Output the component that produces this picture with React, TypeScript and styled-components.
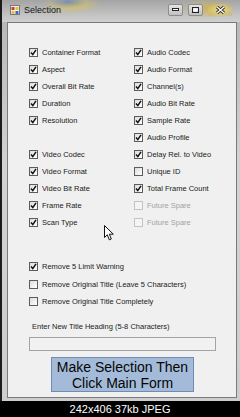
import React from "react";
import styled, { createGlobalStyle } from "styled-components";

const GlobalStyle = createGlobalStyle`
  html, body {
    margin: 0;
    padding: 0;
    background: #000;
  }
  body {
    font-family: "Liberation Sans", Arial, sans-serif;
  }
`;

const Page = styled.div`
  width: 240px;
  height: 417px;
  display: flex;
  flex-direction: column;
  overflow: hidden;
`;

const Window = styled.div`
  height: 401px;
  box-sizing: border-box;
  display: flex;
  flex-direction: column;
  border-left: 2px solid #1c1c1c;
  padding: 0 3px 3px 5px;
  background: linear-gradient(#b4b4b4, #d2d2d2 40%, #cdcdcd);
`;

const TitleBar = styled.div`
  height: 22px;
  display: flex;
  align-items: center;
  margin: 0 -3px 0 -5px;
  padding: 0 8px 3px 8px;
  box-sizing: border-box;
  background:
    radial-gradient(ellipse 18px 6px at 66px 2px, rgba(60, 110, 220, 0.55), transparent),
    radial-gradient(ellipse 30px 9px at 70px 5px, rgba(225, 200, 70, 0.65), transparent),
    radial-gradient(ellipse 26px 10px at 205px 9px, rgba(215, 180, 60, 0.7), transparent),
    linear-gradient(#a4a4a4, #c4c4c4 70%, #d0d0d0);
`;

const TitleText = styled.span`
  font-size: 9px;
  color: #151515;
  margin-left: 4px;
  flex: 1;
`;

const Controls = styled.div`
  display: flex;
  align-items: center;
  gap: 5px;
`;

const ControlButton = styled.div<{ $w: number; $close?: boolean }>`
  width: ${(p) => p.$w}px;
  height: 10px;
  display: flex;
  align-items: center;
  justify-content: center;
  border-radius: 2px;
  background: ${(p) =>
    p.$close
      ? "radial-gradient(ellipse at center, rgba(240,220,130,0.9), rgba(200,170,70,0.4))"
      : "linear-gradient(#e4e4e4, #c0c0c0)"};
  border: 1px solid ${(p) => (p.$close ? "transparent" : "#8c8c8c")};
`;

const Client = styled.div`
  flex: 1;
  position: relative;
  background: #f0f0f0;
  border: 1px solid #7a7a7a;
  color: #1a1a1a;
  font-size: 7.5px;
`;

const CheckGrid = styled.div`
  margin-top: 21px;
  padding-left: 21px;
  display: grid;
  grid-template-columns: 105px 1fr;
  grid-template-rows: repeat(11, 17px);
  grid-auto-flow: column;
`;

const Row = styled.div<{ $h?: number }>`
  height: ${(p) => p.$h ?? 17}px;
  display: flex;
  align-items: center;
  gap: 4px;
`;

const Label = styled.span<{ $disabled?: boolean }>`
  color: ${(p) => (p.$disabled ? "#a3a3a3" : "#1a1a1a")};
  white-space: nowrap;
`;

const Box = styled.span<{ $disabled?: boolean }>`
  width: 9px;
  height: 9px;
  box-sizing: border-box;
  display: flex;
  align-items: center;
  justify-content: center;
  border: 1px solid ${(p) => (p.$disabled ? "#c4c4c4" : "#5c5c5c")};
  background: ${(p) =>
    p.$disabled ? "#f4f4f4" : "linear-gradient(135deg, #dcdcdc, #ffffff)"};
`;

const RemoveList = styled.div`
  margin-top: 27px;
  padding-left: 21px;
`;

const FieldLabel = styled.div`
  margin: 11px 0 0 24px;
  height: 10px;
  line-height: 10px;
`;

const TitleInput = styled.div`
  margin: 5px 0 0 21px;
  width: 187px;
  height: 14px;
  box-sizing: border-box;
  border: 1px solid #a4a4a4;
  background: #f1f1f1;
`;

const MainButton = styled.div`
  margin: 6px 0 0 43px;
  width: 143px;
  height: 35px;
  box-sizing: border-box;
  border: 1px solid #6f8cb3;
  background: #a3bbd8;
  color: #050505;
  font-size: 14px;
  line-height: 16px;
  text-align: center;
  padding-top: 1px;
`;

const Pointer = styled.svg`
  position: absolute;
  left: 96px;
  top: 202px;
`;

const Caption = styled.div`
  height: 16px;
  background: #000;
  color: #fff;
  font-size: 11px;
  line-height: 16px;
  text-align: center;
`;

type Item = { label: string; checked: boolean; disabled?: boolean } | null;

const leftItems: Item[] = [
  { label: "Container Format", checked: true },
  { label: "Aspect", checked: true },
  { label: "Overall Bit Rate", checked: true },
  { label: "Duration", checked: true },
  { label: "Resolution", checked: true },
  null,
  { label: "Video Codec", checked: true },
  { label: "Video Format", checked: true },
  { label: "Video Bit Rate", checked: true },
  { label: "Frame Rate", checked: true },
  { label: "Scan Type", checked: true },
];

const rightItems: Item[] = [
  { label: "Audio Codec", checked: true },
  { label: "Audio Format", checked: true },
  { label: "Channel(s)", checked: true },
  { label: "Audio Bit Rate", checked: true },
  { label: "Sample Rate", checked: true },
  { label: "Audio Profile", checked: true },
  { label: "Delay Rel. to Video", checked: true },
  { label: "Unique ID", checked: false },
  { label: "Total Frame Count", checked: true },
  { label: "Future Spare", checked: false, disabled: true },
  { label: "Future Spare", checked: false, disabled: true },
];

const removeItems = [
  { label: "Remove 5 Limit Warning", checked: true },
  { label: "Remove Original Title (Leave 5 Characters)", checked: false },
  { label: "Remove Original Title Completely", checked: false },
];

const Check: React.FC<{ checked: boolean; disabled?: boolean }> = ({ checked, disabled }) => (
  <Box $disabled={disabled}>
    {checked && (
      <svg width="7" height="7" viewBox="0 0 7 7">
        <path d="M1 3.6 L2.8 5.6 L6 0.8" fill="none" stroke="#111" strokeWidth="1.5" />
      </svg>
    )}
  </Box>
);

const CheckRow: React.FC<{ item: Item; h?: number }> = ({ item, h }) =>
  item ? (
    <Row $h={h}>
      <Check checked={item.checked} disabled={item.disabled} />
      <Label $disabled={item.disabled}>{item.label}</Label>
    </Row>
  ) : (
    <Row $h={h} />
  );

export default function App() {
  return (
    <Page>
      <GlobalStyle />
      <Window>
        <TitleBar>
          <svg width="10" height="10" viewBox="0 0 10 10">
            <rect x="0.5" y="0.5" width="9" height="9" fill="#f2f2f2" stroke="#7a7a7a" />
            <rect x="1.5" y="2" width="3" height="3" fill="#d83a2a" />
            <rect x="5.5" y="2" width="3" height="3" fill="#e8c030" />
            <rect x="1.5" y="6" width="3" height="3" fill="#e8c030" />
            <rect x="5.5" y="6" width="3" height="3" fill="#3a6ad8" />
          </svg>
          <TitleText>Selection</TitleText>
          <Controls>
            <ControlButton $w={13}>
              <svg width="7" height="3" viewBox="0 0 7 3">
                <rect x="0.5" y="0.5" width="6" height="2" fill="#fff" stroke="#222" />
              </svg>
            </ControlButton>
            <ControlButton $w={13}>
              <svg width="7" height="6" viewBox="0 0 7 6">
                <rect x="0.5" y="0.5" width="6" height="5" fill="none" stroke="#222" />
                <rect x="1.5" y="1.5" width="4" height="3" fill="#fff" />
              </svg>
            </ControlButton>
            <ControlButton $w={22} $close>
              <svg width="9" height="8" viewBox="0 0 9 8">
                <path d="M1 1 L8 7 M8 1 L1 7" stroke="#222" strokeWidth="3" />
                <path d="M1 1 L8 7 M8 1 L1 7" stroke="#fff" strokeWidth="1.4" />
              </svg>
            </ControlButton>
          </Controls>
        </TitleBar>
        <Client>
          <CheckGrid>
            {leftItems.map((item, i) => (
              <CheckRow key={"l" + i} item={item} />
            ))}
            {rightItems.map((item, i) => (
              <CheckRow key={"r" + i} item={item} />
            ))}
          </CheckGrid>
          <RemoveList>
            {removeItems.map((item) => (
              <CheckRow key={item.label} item={item} h={17.5} />
            ))}
          </RemoveList>
          <FieldLabel>Enter New Title Heading (5-8 Characters)</FieldLabel>
          <TitleInput />
          <MainButton>
            Make Selection Then
            <br />
            Click Main Form
          </MainButton>
          <Pointer width="11" height="16" viewBox="0 0 11 16">
            <path
              d="M0.5 0.5 L0.5 12.5 L3.3 9.8 L5.3 14.8 L7.3 14 L5.4 9.2 L9.3 9.2 Z"
              fill="#fff"
              stroke="#111"
              strokeWidth="1"
              strokeLinejoin="round"
            />
          </Pointer>
        </Client>
      </Window>
      <Caption>242x406 37kb JPEG</Caption>
    </Page>
  );
}
